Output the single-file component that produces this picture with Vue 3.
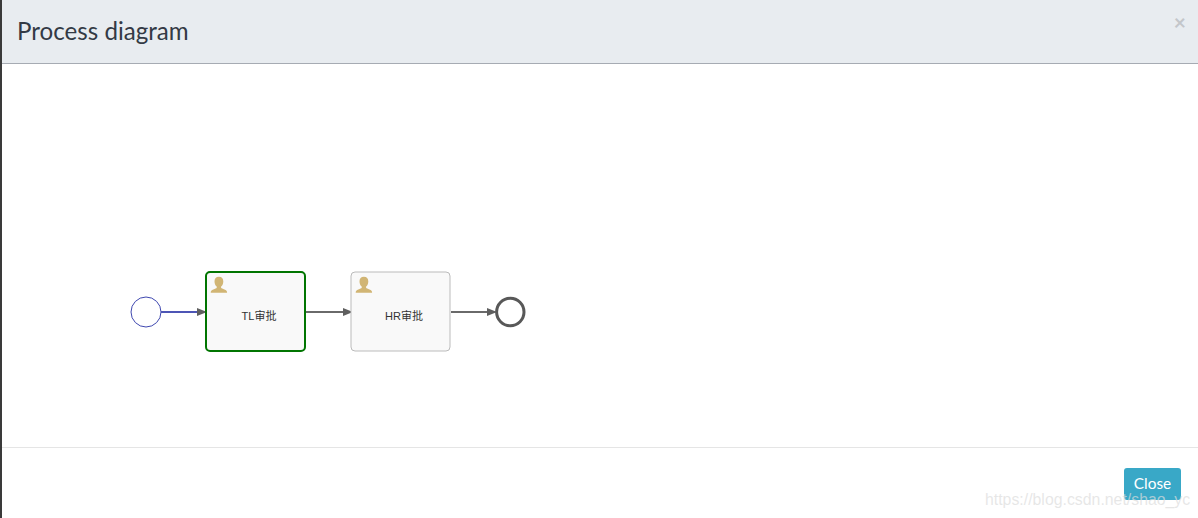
<script setup>
const startY = 312 - 64
const tasks = [
  { id: 'tl', label: 'TL审批', x: 206, active: true, labelX: 259 },
  { id: 'hr', label: 'HR审批', x: 351, active: false, labelX: 404 },
]
const flows = [
  { d: `M161 ${startY}H199`, head: 207, color: '#4d55b5', width: 2 },
  { d: `M306 ${startY}H344`, head: 353, color: '#6a6a6a', width: 2 },
  { d: `M451 ${startY}H488`, head: 497, color: '#6a6a6a', width: 2 },
]
</script>

<template>
  <div class="page">
    <div class="modal">
      <header class="modal-header">
        <h4 class="modal-title">Process diagram</h4>
        <span class="modal-close">×</span>
      </header>
      <main class="modal-body">
        <svg class="diagram" width="1196" height="383" viewBox="0 0 1196 383" xmlns="http://www.w3.org/2000/svg">
          <g transform="translate(-2 0)">
            <circle cx="146" :cy="startY" r="15" fill="#fff" stroke="#3f48b0" stroke-width="1" />
            <g v-for="f in flows" :key="f.head">
              <path :d="f.d" fill="none" :stroke="f.color" :stroke-width="f.width" />
              <path :d="`M${f.head} ${startY}L${f.head - 10} ${startY - 4}V${startY + 4}Z`" fill="#5f5f5f" />
            </g>
            <circle cx="510.300" :cy="startY" r="13.700" fill="#fff" stroke="#585858" stroke-width="3" />
            <g v-for="t in tasks" :key="t.id">
              <rect
                :x="t.x" y="208" width="99" height="79" rx="4"
                fill="#f9f9f9"
                :stroke="t.active ? '#017501' : '#bbbbbb'"
                :stroke-width="t.active ? 2 : 1"
              />
              <path
                :transform="`translate(${t.x + 4.7} 212.700)`"
                fill="#d1b574"
                d="M8.200 0C5.300 0 3.800 2 3.800 4.700c0 2.200.9 4 2.200 5.100v1.600L1.500 13.200C.6 13.700 0 14.600 0 16h16.400c0-1.400-.6-2.300-1.500-2.800l-4.500-1.800V9.800c1.300-1.100 2.200-2.900 2.200-5.100C12.600 2 11.100 0 8.200 0Z"
              />
              <text class="task-label" :x="t.labelX" y="255.500" text-anchor="middle">{{ t.label }}</text>
            </g>
          </g>
        </svg>
      </main>
      <footer class="modal-footer">
        <button class="btn-close" type="button">Close</button>
      </footer>
    </div>
    <span class="watermark">https://blog.csdn.net/shao_yc</span>
  </div>
</template>

<style>
html, body { margin: 0; background: #fff; overflow: hidden; }
</style>

<style scoped>
.page {
  position: relative;
  width: 1198px;
  height: 518px;
  overflow: hidden;
  display: flex;
  background: #fff;
  border-left: 2px solid #3a3a3a;
  box-sizing: border-box;
  font-family: Lato, "Noto Sans", sans-serif;
}
.modal {
  flex: 1;
  display: flex;
  flex-direction: column;
  min-width: 0;
}
.modal-header {
  height: 63px;
  flex: none;
  display: flex;
  align-items: flex-start;
  justify-content: space-between;
  padding: 0 0 0 15px;
  background: #e8ecf0;
  border-bottom: 1px solid #a6abb3;
}
.modal-title {
  margin: 19px 0 0;
  font-size: 24.15px;
  font-weight: 400;
  color: #333a45;
  line-height: 1;
}
.modal-close {
  margin: 11px 12px 0 0;
  font-size: 21px;
  font-weight: 700;
  line-height: 21px;
  color: #c3c6ca;
}
.modal-body {
  height: 383px;
  flex: none;
  border-bottom: 1px solid #e5e5e5;
  box-sizing: content-box;
}
.diagram { display: block; }
.task-label {
  font-family: "Liberation Sans", "Noto Sans CJK SC", sans-serif;
  font-size: 11px;
  fill: #333333;
}
.modal-footer {
  flex: 1;
  display: flex;
  justify-content: flex-end;
  align-items: flex-start;
  padding: 20px 17px 0 0;
}
.btn-close {
  width: 57px;
  height: 32px;
  padding: 0 0 2px;
  border: 0;
  border-radius: 3px;
  background: #39a8c7;
  color: #fff;
  font-family: Lato, "Noto Sans", sans-serif;
  font-size: 15.4px;
}
.watermark {
  position: absolute;
  left: 983px;
  top: 490px;
  font-family: "Liberation Sans", sans-serif;
  font-size: 15.85px;
  line-height: 20px;
  color: rgba(220, 220, 220, 0.7);
  white-space: nowrap;
}
</style>
